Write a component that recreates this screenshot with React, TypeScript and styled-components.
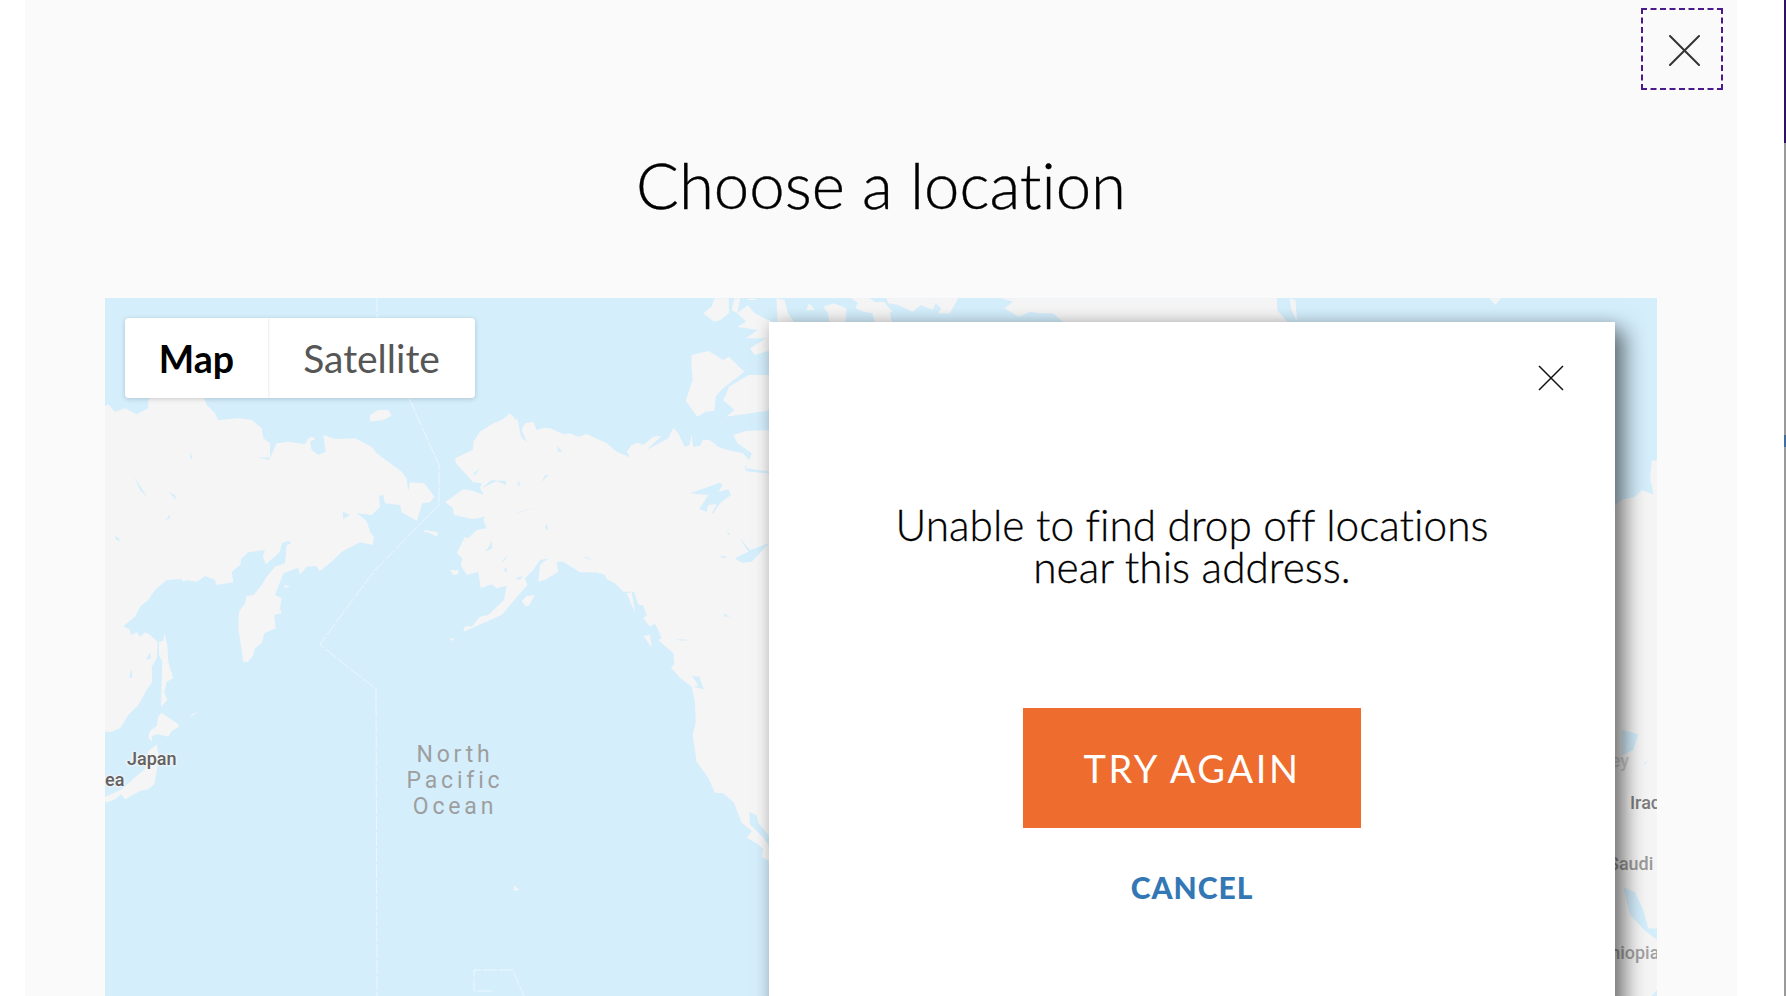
import styled, { createGlobalStyle } from 'styled-components';

const GlobalStyle = createGlobalStyle`
  html, body {
    margin: 0;
    padding: 0;
    height: 100%;
    background: #fff;
    overflow: hidden;
    font-family: 'Lato', 'Liberation Sans', sans-serif;
    font-variant-ligatures: none;
  }
`;

const Page = styled.div`
  display: flex;
  width: 1786px;
  height: 996px;
  overflow: hidden;
`;

const Modal = styled.div`
  display: flex;
  flex-direction: column;
  width: 1712px;
  margin-left: 25px;
  background: #fafafa;
`;

const ModalHeader = styled.div`
  display: flex;
  justify-content: flex-end;
  padding: 8px 14px 0 0;
`;

const CloseButton = styled.button`
  display: flex;
  align-items: center;
  justify-content: center;
  width: 82px;
  height: 82px;
  padding: 1px 0 0 4px;
  box-sizing: border-box;
  border: 2px dashed #4a1a8c;
  background: none;
`;

const Title = styled.h1`
  margin: 43px 0 0;
  height: 165px;
  text-align: center;
  font-size: 63.5px;
  line-height: 104px;
  font-weight: 300;
  color: #000;
  -webkit-text-stroke: 0.4px #000;
`;

const MapArea = styled.div`
  position: relative;
  flex: 1;
  margin: 0 80px;
  overflow: hidden;
  background: #d4eefc;
`;

const MapDrawing = styled.svg`
  position: absolute;
  inset: 0;
  display: block;
`;

const PlaceLabel = styled.span<{ $x: number; $y: number; $tone?: string }>`
  position: absolute;
  left: ${(p) => p.$x}px;
  top: ${(p) => p.$y}px;
  font-family: 'Roboto', sans-serif;
  font-size: 18px;
  line-height: 20px;
  font-weight: 500;
  color: ${(p) => p.$tone || '#616161'};
  text-shadow: 0 0 3px #f5f5f5, 0 0 3px #f5f5f5, 0 0 3px #f5f5f5;
  white-space: nowrap;
`;

const OceanLabel = styled.div`
  position: absolute;
  left: 250px;
  top: 444px;
  width: 200px;
  text-align: center;
  font-family: 'Roboto', sans-serif;
  font-size: 23px;
  line-height: 26px;
  letter-spacing: 3.8px;
  color: #9e9e9e;
`;

const MapTypeSwitch = styled.div`
  position: absolute;
  left: 20px;
  top: 20px;
  display: flex;
  width: 350px;
  height: 80px;
  border-radius: 4px;
  overflow: hidden;
  background: #fff;
  box-shadow: 0 1px 5px rgba(0, 0, 0, 0.18);
`;

const MapTypeTab = styled.div<{ $active?: boolean }>`
  display: flex;
  align-items: center;
  justify-content: center;
  width: ${(p) => (p.$active ? '143px' : '207px')};
  font-size: ${(p) => (p.$active ? '37.5px' : '39px')};
  font-weight: ${(p) => (p.$active ? 700 : 400)};
  color: ${(p) => (p.$active ? '#000' : '#565656')};
  box-shadow: ${(p) => (p.$active ? '0 0 3px rgba(0, 0, 0, 0.14)' : 'none')};
`;

const Dialog = styled.div`
  position: absolute;
  left: 664px;
  top: 24px;
  bottom: -40px;
  width: 846px;
  display: flex;
  flex-direction: column;
  align-items: center;
  background: #fff;
  box-shadow: 10px 8px 20px rgba(0, 0, 0, 0.5), 0 0 14px rgba(0, 0, 0, 0.12);
`;

const DialogClose = styled.button`
  align-self: flex-end;
  display: flex;
  padding: 0;
  margin: 43px 51px 0 0;
  border: none;
  background: none;
`;

const Message = styled.p`
  margin: 113px 0 0;
  text-align: center;
  font-size: 42.4px;
  line-height: 42px;
  font-weight: 300;
  color: #000;
  -webkit-text-stroke: 0.3px #000;
`;

const PrimaryButton = styled.button`
  width: 338px;
  height: 120px;
  margin-top: 120px;
  border: none;
  background: #ee6c2e;
  color: #fff;
  font-family: inherit;
  font-size: 38px;
  font-weight: 400;
  letter-spacing: 2.6px;
`;

const TextButton = styled.button`
  margin-top: 39px;
  padding: 0;
  border: none;
  background: none;
  color: #3378b5;
  font-family: inherit;
  font-size: 30px;
  line-height: 40px;
  font-weight: 900;
  letter-spacing: 1px;
`;

const Rail = styled.div`
  display: flex;
  flex-direction: column;
  width: 2px;
  margin-left: 47px;
`;

const RailPart = styled.div<{ $color: string; $height?: number }>`
  background: ${(p) => p.$color};
  flex: ${(p) => (p.$height ? `0 0 ${p.$height}px` : 1)};
`;

// land outlines were traced from crops of the map, so each one keeps its crop origin and scale
const P = (ox: number, oy: number, list: string, sx = 3, sy = 3) =>
  list
    .trim()
    .split(/\s+/)
    .map((pair) => {
      const [x, y] = pair.split(',').map(Number);
      return `${(ox + x / sx).toFixed(1)},${(oy + y / sy).toFixed(1)}`;
    })
    .join(' ');

const asia = P(105, 395, `-5,35 10,28 30,50 60,40 95,58 130,40 130,15 160,-10 290,-10 305,30 330,55 340,75 400,70 440,75 470,100 475,130 495,145 495,188 460,186 492,196 515,145 550,140 600,148 610,130 620,125 632,132 615,140 620,165 640,180 662,170 655,120 690,132 750,130 800,155 815,175 890,230 905,250 910,288 915,262 958,265 988,305 975,322 952,325 936,377 890,352 885,330 840,325 835,300 822,302 825,335 800,360 755,355 785,378 795,410 807,425 803,450 765,442 710,470 680,500 645,528 632,513 605,515 585,538 580,518 535,535 510,600 530,610 525,640 530,655 508,660 512,700 478,715 470,745 450,760 445,780 430,800 415,800 400,700 402,650 420,625 425,603 445,600 470,570 485,545 510,515 540,505 545,450 560,445 550,438 530,445 525,470 483,508 473,485 480,465 430,472 410,490 405,510 380,530 385,562 335,570 330,555 300,543 275,560 245,555 235,560 230,552 185,555 150,585 130,615 105,635 90,665 55,693 75,705 78,720 95,712 105,725 120,712 135,720 158,740 155,790 140,815 142,860 125,885 100,930 70,960 45,1000 15,1012 -5,1008`);

const asiaLakes = [
  '88,245 100,265 128,308 105,285',
  '190,290 215,315 210,300',
  '195,358 182,375 195,370',
  '30,420 47,437 33,435',
  '258,170 262,190 255,190',
  '713,350 735,360 715,372',
  '80,820 82,848 72,848',
  '135,772 122,795 138,790',
].map((l) => P(105, 395, l));

const northAmerica =
  P(430, 395, `240,55 258,75 262,70 270,110 275,130 290,140 275,105 285,85 310,80 320,105 342,98 360,100 400,118 420,115 445,125 470,117 530,145 560,170 600,187 590,170 605,150 625,143 640,150 670,125 695,122 650,165 715,130 730,98 745,115 765,155 778,150 785,118 790,155 810,152 818,135 840,135 865,155 895,165 940,175 965,205 945,215 948,228 990,233 1100,225 1100,1500`) +
  ' ' +
  P(430, 656, `1100,1020 1100,625 1017,615 995,603 1000,580 985,565 950,545 965,525 935,500 912,440 880,412 855,410 835,365 800,318 795,285 788,235 797,200 795,140 785,92 750,65 723,35 733,25 730,0`) +
  ' ' +
  P(430, 395, `755,850 725,815 735,810 730,775 685,735 695,730 675,685 660,695 640,670 650,660 640,632 625,628 612,590 590,595 615,655 605,590 580,590 555,565 530,553 525,540 500,532 450,532 400,500 380,500 385,530 345,555 325,560 330,510 355,490 330,495 310,525 285,550 292,570 215,660 100,710 105,693 125,695 150,665 175,660 222,615 230,572 200,580 185,568 152,580 145,530 110,540 92,510 97,490 80,475 105,425 115,430 140,405 170,400 160,375 165,365 130,372 72,360 68,338 45,322 100,283 120,285 162,300 150,278 155,265 130,262 78,205 75,190 128,165 130,140 150,110 190,85 215,75`);

const naLakes = [
  '780,295 870,263 878,270 865,290 895,283 903,300 870,325 850,355 845,355 860,328 835,330 830,350 808,342 835,300',
  '930,430 960,465 1017,445 965,500 935,503 915,490 955,470',
  '868,483 895,485 880,490',
  '890,410 900,415 895,420',
  '880,655 900,665 885,665',
  '738,732 780,735 755,737',
  '250,358 328,335 270,350',
  '345,240 355,240 335,262',
  '380,152 398,170 385,170',
  '350,385 355,405 345,400',
  '130,235 150,222 135,240',
  '185,435 187,460 165,470 180,450',
  '235,480 210,505 225,495',
  '265,255 272,272 263,272',
  '183,256 228,258 228,270 200,258 155,280',
  '455,485 490,497 470,487',
  '220,520 232,520 228,535',
  '255,550 278,542 270,555',
  // inlets along the arctic coast on the right
  '770,0 795,28 820,65 855,45 865,5 895,0 880,25 895,45 940,45 890,70 905,90 975,90 1005,103 990,112 915,125 930,150 965,160 980,190 1017,190 1017,235 948,228 945,215 965,205 940,175 895,165 865,155 840,135 818,135 810,152 790,155 785,118 778,150 765,155 745,115 730,98',
].map((l) => P(430, 395, l));

const archipelago = [
  '20,225 50,213 75,240 85,230 112,275 75,325 62,350 60,392 45,395 30,410 10,362 22,300 20,260',
  '160,210 130,225 122,205 150,175 115,175 135,150 100,140 115,125 100,100 118,75 130,100 160,125',
  '160,285 120,285 85,320 80,345 75,360 95,390 80,410 160,390',
  '160,450 115,453 93,465 100,490 125,520 115,565 160,575',
  '40,100 55,80 60,55 85,55 85,100 70,120 60,125',
  '95,55 105,55 100,100 90,90',
  '125,55 135,60 115,60',
  '168,55 182,60 188,100 200,130 170,130',
  '225,70 235,90 220,90',
  '250,80 268,70 290,85 288,130 260,130 258,100',
  '298,55 330,55 340,66 355,65 370,95 365,100 370,130 340,130 335,100 320,95 305,85 310,70',
  '360,55 485,55 480,70 470,100 450,100 455,85 445,70 440,90 420,75 405,95 380,75 362,70',
  '555,55 1040,55 1040,90 1060,130 670,130 650,100 625,100 610,95 590,110 565,85 580,65 560,55',
  '1062,55 1072,60 1075,125 1065,90',
  '1410,55 1430,55 1420,75',
].map((l) => P(680, 280, l, 1.742, 3));

const islands = [
  P(105, 395, '795,60 820,45 850,45 860,62 835,75 795,80'),
  P(105, 395, '958,405 1000,412 995,425 975,415 958,410'),
  P(105, 395, '178,715 187,750 190,800 205,850 185,860 178,890 187,915 168,935 172,800 162,780 162,740 175,738'),
  P(105, 395, '540,570 555,575 538,580'),
  P(105, 656, '170,170 220,205 222,213 200,225 190,242 160,235 140,240 142,258 130,245 135,225 155,210 160,180'),
  P(105, 656, '155,265 160,300 155,345 148,385 130,400 105,405 60,430 48,415 30,430 5,440 -5,425 50,400 95,360 120,340 130,285'),
  P(105, 656, '280,165 255,185 262,175'),
  P(105, 395, '200,-30 230,-30 240,-15 205,-15'),
  P(430, 395, '290,603 315,600 298,630 288,635 275,618'),
  P(430, 395, '60,525 85,525 85,538 70,540'),
  P(430, 395, '60,728 75,732 62,738'),
  P(430, 395, '640,722 660,720 665,758'),
  P(430, 656, '252,688 268,702 252,704'),
];

const farEast = P(1580, 280, '231,395 215,395 210,435 215,450 220,470 185,460 165,475 130,480 90,500 90,1600 231,1600', 3, 2.19);
const farEastWater = [
  '125,985 175,995 160,1030 125,1040',
  '190,1058 205,1053 195,1060',
  '130,1330 165,1340 190,1380 205,1420 231,1420 231,1445 195,1425 150,1390',
  '231,1555 215,1568 231,1575',
].map((l) => P(1580, 280, l, 3, 2.19));

const bajaStrait = P(430, 656, '958,468 980,478 985,500 1017,540 1017,570 1000,545 960,505');
const pugetSound = P(430, 656, '785,60 808,62 822,100 790,92 805,90 795,72');

const borders = [
  '377,298 377,318',
  '409,398 439,465 439,500 439,505 375,570 320,644 323,647 376,689 377,996',
  `${P(430, 656, '185,1005 132,1005 132,942 248,942 282,1020')}`,
];

const App = () => {
  return (
    <Page>
      <GlobalStyle />
      <Modal>
        <ModalHeader>
          <CloseButton aria-label="Close">
            <svg width="32" height="32" viewBox="0 0 32 32">
              <path d="M2 2 L31 31 M31 2 L2 31" stroke="#333" strokeWidth="2" strokeLinecap="round" />
            </svg>
          </CloseButton>
        </ModalHeader>
        <Title>Choose a location</Title>
        <MapArea>
          <MapDrawing width="1552" height="698" viewBox="105 298 1552 698">
            <g fill="#f5f5f5">
              <polygon points={asia} />
              <polygon points={northAmerica} />
              <polygon points={farEast} />
              {islands.map((pts) => (
                <polygon key={pts} points={pts} />
              ))}
            </g>
            <g fill="#d4eefc">
              {[...asiaLakes, ...naLakes, ...farEastWater, bajaStrait, pugetSound].map((pts) => (
                <polygon key={pts} points={pts} />
              ))}
            </g>
            <g fill="#f5f5f5">
              {archipelago.map((pts) => (
                <polygon key={pts} points={pts} />
              ))}
            </g>
            <g fill="none" stroke="#eef7fc" strokeWidth="1" strokeDasharray="14 2">
              {borders.map((pts) => (
                <polyline key={pts} points={pts} />
              ))}
            </g>
          </MapDrawing>
          <PlaceLabel $x={22} $y={451}>Japan</PlaceLabel>
          <PlaceLabel $x={0} $y={472}>ea</PlaceLabel>
          <PlaceLabel $x={1525} $y={495} $tone="#7d7d7d">Iraq</PlaceLabel>
          <PlaceLabel $x={1503} $y={556} $tone="#9a9a9a">Saudi</PlaceLabel>
          <PlaceLabel $x={1489} $y={645} $tone="#a2a2a2">Ethiopia</PlaceLabel>
          <PlaceLabel $x={1470} $y={453} $tone="#d2d2d2">Turkey</PlaceLabel>
          <OceanLabel>
            North
            <br />
            Pacific
            <br />
            Ocean
          </OceanLabel>
          <MapTypeSwitch>
            <MapTypeTab $active>Map</MapTypeTab>
            <MapTypeTab>Satellite</MapTypeTab>
          </MapTypeSwitch>
          <Dialog>
            <DialogClose aria-label="Dismiss">
              <svg width="26" height="26" viewBox="0 0 26 26">
                <path d="M1 1 L25 25 M25 1 L1 25" stroke="#111" strokeWidth="1.5" />
              </svg>
            </DialogClose>
            <Message>
              Unable to find drop off locations
              <br />
              near this address.
            </Message>
            <PrimaryButton>TRY AGAIN</PrimaryButton>
            <TextButton>CANCEL</TextButton>
          </Dialog>
        </MapArea>
      </Modal>
      <Rail>
        <RailPart $color="#2f1160" $height={143} />
        <RailPart $color="#9a9a9a" $height={292} />
        <RailPart $color="#3f6f9f" $height={12} />
        <RailPart $color="#9a9a9a" />
      </Rail>
    </Page>
  );
};

export default App;
